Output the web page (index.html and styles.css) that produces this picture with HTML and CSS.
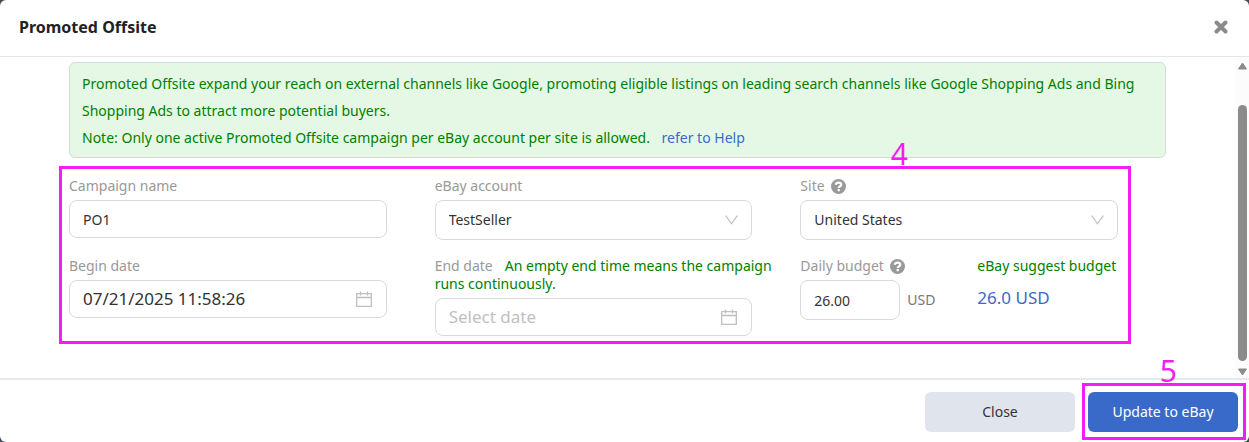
FILE: index.html
```html
<!DOCTYPE html>
<html lang="en">
<head>
<meta charset="utf-8">
<title>Promoted Offsite</title>
<link rel="stylesheet" href="styles.css">
</head>
<body>
<svg class="defs" aria-hidden="true">
  <symbol id="calendar" viewBox="0 0 16 16"><path d="M.7 2.7h14.6v12.6H.7zM.7 6.500h14.600M4.500.5v4M11.500.5v4" fill="none" stroke="currentColor" stroke-width="1.3"/></symbol>
  <symbol id="chevron" viewBox="0 0 13 10"><path d="M.7.7 6.5 8.8 12.3.7" fill="none" stroke="currentColor" stroke-width="1.2"/></symbol>
  <symbol id="question" viewBox="0 0 14 14"><circle cx="7" cy="7" r="7" fill="currentColor"/><path d="M4.400 5.300C4.700 3.900 5.800 3.300 7 3.300c1.500 0 2.500.8 2.500 2 0 1.600-2.300 1.500-2.300 3.100M7.200 9.400v2" fill="none" stroke="#fff" stroke-width="2.100"/></symbol>
</svg>
<div class="dialog" role="dialog" aria-labelledby="title">
  <header class="header">
    <h1 class="title" id="title">Promoted Offsite</h1>
    <button class="dismiss" type="button" aria-label="Dismiss">
      <svg width="14" height="14" viewBox="0 0 14 14"><path d="M2.500 2.500l9 9M11.500 2.500l-9 9" stroke="currentColor" stroke-width="4" stroke-linecap="round"/></svg>
    </button>
  </header>
  <div class="body">
    <main class="content">
      <p class="notice">Promoted Offsite expand your reach on external channels like Google, promoting eligible listings on leading search channels like Google Shopping Ads and Bing Shopping Ads to attract more potential buyers.<br>Note: Only one active Promoted Offsite campaign per eBay account per site is allowed. <a class="link" href="#help">refer to Help</a></p>
      <form class="form" id="campaign">
        <div class="field">
          <div class="caption"><label for="name">Campaign name</label></div>
          <div class="control"><input class="input" id="name" type="text" value="PO1"></div>
        </div>
        <div class="field">
          <div class="caption"><label for="account">eBay account</label></div>
          <div class="control"><select class="input select" id="account"><option>TestSeller</option></select><svg class="icon chevron"><use href="#chevron"/></svg></div>
        </div>
        <div class="field">
          <div class="caption"><label for="site">Site</label><svg class="help"><use href="#question"/></svg></div>
          <div class="control"><select class="input select" id="site"><option>United States</option></select><svg class="icon chevron"><use href="#chevron"/></svg></div>
        </div>
        <div class="field">
          <div class="caption"><label for="begin">Begin date</label></div>
          <div class="control"><input class="input date" id="begin" type="text" value="07/21/2025 11:58:26"><svg class="icon calendar"><use href="#calendar"/></svg></div>
        </div>
        <div class="field">
          <div class="caption"><label for="end">End date</label><span class="hint">An empty end time means the campaign runs continuously.</span></div>
          <div class="control"><input class="input date" id="end" type="text" placeholder="Select date"><svg class="icon calendar"><use href="#calendar"/></svg></div>
        </div>
        <div class="field split">
          <div class="budget">
            <div class="caption"><label for="budget">Daily budget</label><svg class="help"><use href="#question"/></svg></div>
            <div class="amount"><input class="input tall" id="budget" type="text" value="26.00"><span class="unit">USD</span></div>
          </div>
          <div class="suggest">
            <div class="caption suggest-caption">eBay suggest budget</div>
            <a class="suggest-value" href="#suggest">26.0 USD</a>
          </div>
        </div>
        <div class="mark mark-form"><span class="step">4</span></div>
      </form>
    </main>
    <div class="scrollbar" aria-hidden="true">
      <svg width="9" height="8" viewBox="0 0 9 8"><path d="M4.500 1 8.500 7h-8z" fill="#8b8b8b" stroke="#8b8b8b" stroke-linejoin="round"/></svg>
      <div class="thumb"></div>
      <svg width="9" height="8" viewBox="0 0 9 8"><path d="M4.500 7 .5 1h8z" fill="#8b8b8b" stroke="#8b8b8b" stroke-linejoin="round"/></svg>
    </div>
  </div>
  <footer class="footer">
    <button class="button" type="button">Close</button>
    <div class="primary-wrap">
      <button class="button primary" type="submit" form="campaign">Update to eBay</button>
      <div class="mark mark-submit"><span class="step">5</span></div>
    </div>
  </footer>
</div>
</body>
</html>
```
FILE: styles.css
```css
* { box-sizing: border-box; }
body {
  margin: 0;
  background: #444a55;
  color: #333;
  font: 14px/18px "Noto Sans", sans-serif;
}
button, input, select { font: inherit; color: inherit; }
.defs { position: absolute; width: 0; height: 0; }
.dialog {
  display: flex;
  flex-direction: column;
  min-height: 100vh;
  background: #fff;
  border-radius: 6px;
}
.header {
  display: flex;
  align-items: center;
  justify-content: space-between;
  padding: 13px 21px 15px 19px;
  border-bottom: 1px solid #e5e5e5;
}
.title { margin: 0; font-size: 16px; line-height: 28px; color: #222; }
.dismiss { display: flex; padding: 0; border: 0; background: none; color: #8b8b8b; }
.body { display: flex; flex: 1; }
.content { flex: 1; padding: 5px 69px 42px; }
.notice {
  margin: 0;
  padding: 7px 12px 6px;
  border: 1px solid #d4dcd4;
  border-radius: 6px;
  background: #e5f8e5;
  color: #008000;
  line-height: 27px;
}
.link { margin-left: 8px; color: #3a6ac9; text-decoration: none; }
.form {
  position: relative;
  display: grid;
  grid-template-columns: repeat(3, 1fr);
  row-gap: 17px;
  margin-top: 19px;
}
.caption { margin-bottom: 5px; color: #999; }
.hint { margin-left: 12px; color: #008000; }
.help { width: 15px; height: 15px; margin-left: 6px; vertical-align: -3px; }
.control { position: relative; margin-right: 48px; }
.input {
  display: block;
  width: 100%;
  height: 38px;
  padding: 0 13px;
  border: 1px solid #d9d9d9;
  border-radius: 8px;
  background: #fff;
}
.select { height: 40px; appearance: none; }
.date { padding-bottom: 2px; font-size: 17px; }
.date::placeholder { color: #bfbfbf; }
.icon { position: absolute; top: 0; bottom: 0; margin: auto 0; color: #bfbfbf; pointer-events: none; }
.chevron { right: 14px; width: 13px; height: 10px; }
.calendar { right: 15px; width: 16px; height: 16px; }
.split { display: flex; }
.budget { width: 177px; }
.amount { display: flex; align-items: center; gap: 7px; }
.tall { width: 100px; height: 40px; }
.unit { color: #777; }
.suggest-caption { color: #008000; white-space: nowrap; }
.suggest-value { display: block; color: #3a6ac9; font-size: 17px; line-height: 36px; text-decoration: none; }
.scrollbar {
  display: flex;
  flex-direction: column;
  align-items: center;
  width: 14px;
  padding: 5px 2px 2px 3px;
  background: #fcfcfc;
}
.thumb { flex: 1; width: 9px; margin: 35px 0 7px; border-radius: 5px; background: #8b8b8b; }
.footer {
  display: flex;
  justify-content: flex-end;
  gap: 13px;
  padding: 12px 11px 10px;
  border-top: 2px solid #e8e8e8;
}
.button { width: 150px; height: 40px; border: 0; border-radius: 6px; background: #e0e5ed; }
.primary { display: block; background: #3a6ac9; color: #fff; }
.primary-wrap { position: relative; }
.mark { position: absolute; border: 3px solid #f51df5; pointer-events: none; }
.mark-form { inset: -11px 35px -8px -10px; }
.mark-submit { inset: -9px -8px -8px -6px; }
.step { position: absolute; bottom: 100%; color: #f51df5; font: 30px/30px "Noto Sans", sans-serif; }
.mark-form .step { right: 220px; }
.mark-submit .step { right: 66px; }
```
